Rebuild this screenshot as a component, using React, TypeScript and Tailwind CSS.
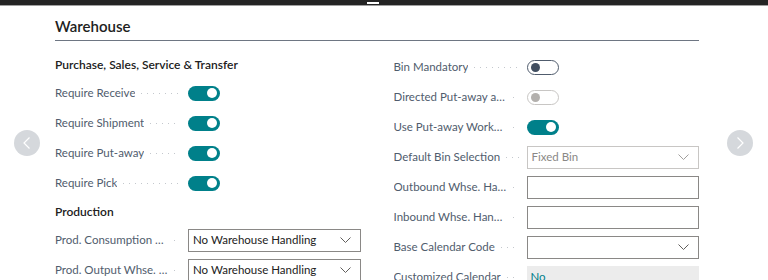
import React from "react";

const font = { fontFamily: "Lato, 'Open Sans', sans-serif" };

function Label({ text }: { text: string }) {
  return (
    <div className="flex items-center w-[133px] pr-[8px] shrink-0">
      <span className="truncate min-w-0 text-[#505c6d]">{text}</span>
      <span className="flex-1 min-w-[6px] ml-[6px] h-px bg-[linear-gradient(to_right,#c4c8cd_1px,transparent_1px)] bg-[length:6px_1px] bg-repeat-x" />
    </div>
  );
}

function Toggle({ on, disabled }: { on: boolean; disabled?: boolean }) {
  if (on) {
    return (
      <div className="w-[32px] h-[15px] rounded-full bg-[#00808a] flex items-center justify-end pr-[3px]">
        <div className="w-[10px] h-[10px] rounded-full bg-white" />
      </div>
    );
  }
  return (
    <div
      className={`w-[32px] h-[15px] rounded-full border flex items-center pl-[3px] ${
        disabled ? "border-[#c8c6c4]" : "border-[#505c6d]"
      }`}
    >
      <div className={`w-[9px] h-[9px] rounded-full ${disabled ? "bg-[#b3b0ad]" : "bg-[#414e60]"}`} />
    </div>
  );
}

function Chevron({ light }: { light?: boolean }) {
  return (
    <svg width="11" height="6" viewBox="0 0 11 6" fill="none">
      <path d="M0.5 0.5 L5.5 5.5 L10.5 0.5" stroke={light ? "#a19f9d" : "#605e5c"} strokeWidth="1" />
    </svg>
  );
}

function Select({ value, muted }: { value?: string; muted?: boolean }) {
  return (
    <div
      className={`flex-1 h-[23px] border flex items-center justify-between pl-[4px] pr-[9px] ${
        muted ? "border-[#c8c6c4]" : "border-[#8a8886]"
      }`}
    >
      <span className={muted ? "text-[#8a8886]" : "text-[#212121]"}>{value}</span>
      <Chevron light={muted} />
    </div>
  );
}

function Row({ children }: { children: React.ReactNode }) {
  return <div className="flex items-center h-[30px]">{children}</div>;
}

export default function App() {
  return (
    <div className="relative w-[768px] h-[280px] overflow-hidden bg-white text-[11.5px]" style={font}>
      <div className="relative h-[6px] bg-[#242424] border-b border-[#a0a0a0]">
        <div className="absolute left-[367px] top-[2px] w-[12px] h-[2px] bg-white" />
      </div>

      <div className="pl-[55px] pr-[69px]">
        <h1 className="text-[15px] font-semibold text-[#212121] pt-[10px] pb-[4px] border-b border-[#6e7683] leading-[20px]">
          Warehouse
        </h1>

        <div className="grid grid-cols-2 gap-[33px] pt-[11px]">
          <div className="flex flex-col">
            <div className="h-[26px] flex items-center text-[12px] font-semibold text-[#212121]">
              Purchase, Sales, Service &amp; Transfer
            </div>
            <Row>
              <Label text="Require Receive" />
              <Toggle on />
            </Row>
            <Row>
              <Label text="Require Shipment" />
              <Toggle on />
            </Row>
            <Row>
              <Label text="Require Put-away" />
              <Toggle on />
            </Row>
            <Row>
              <Label text="Require Pick" />
              <Toggle on />
            </Row>
            <div className="h-[27px] flex items-center text-[12px] font-semibold text-[#212121]">Production</div>
            <Row>
              <Label text="Prod. Consumption Whse. Handling" />
              <Select value="No Warehouse Handling" />
            </Row>
            <Row>
              <Label text="Prod. Output Whse. Handling" />
              <Select value="No Warehouse Handling" />
            </Row>
          </div>

          <div className="flex flex-col">
            <Row>
              <Label text="Bin Mandatory" />
              <Toggle on={false} />
            </Row>
            <Row>
              <Label text="Directed Put-away and Pick" />
              <Toggle on={false} disabled />
            </Row>
            <Row>
              <Label text="Use Put-away Worksheet" />
              <Toggle on />
            </Row>
            <Row>
              <Label text="Default Bin Selection" />
              <Select value="Fixed Bin" muted />
            </Row>
            <Row>
              <Label text="Outbound Whse. Handling Time" />
              <div className="flex-1 h-[23px] border border-[#8a8886]" />
            </Row>
            <Row>
              <Label text="Inbound Whse. Handling Time" />
              <div className="flex-1 h-[23px] border border-[#8a8886]" />
            </Row>
            <Row>
              <Label text="Base Calendar Code" />
              <Select />
            </Row>
            <Row>
              <Label text="Customized Calendar" />
              <div className="flex-1 h-[23px] bg-[#ececec] flex items-center pl-[4px] text-[#00808a]">No</div>
            </Row>
          </div>
        </div>
      </div>

      <div className="absolute left-[14px] top-[130px] w-[26px] h-[26px] rounded-full bg-[#d5d8dc] flex items-center justify-center">
        <svg width="8" height="12" viewBox="0 0 8 12" fill="none">
          <path d="M6.5 0.5 L1 6 L6.5 11.5" stroke="white" strokeWidth="1.2" />
        </svg>
      </div>
      <div className="absolute left-[727px] top-[130px] w-[26px] h-[26px] rounded-full bg-[#d5d8dc] flex items-center justify-center">
        <svg width="8" height="12" viewBox="0 0 8 12" fill="none">
          <path d="M1.5 0.5 L7 6 L1.5 11.5" stroke="white" strokeWidth="1.2" />
        </svg>
      </div>
    </div>
  );
}
